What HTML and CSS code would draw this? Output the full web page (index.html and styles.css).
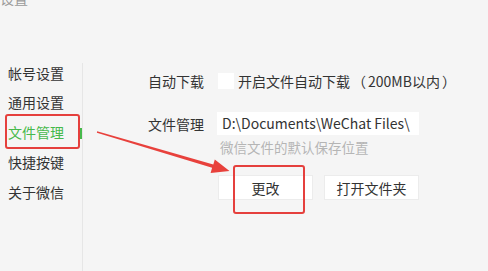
FILE: index.html
```html
<!DOCTYPE html>
<html lang="zh">
<head>
<meta charset="utf-8">
<link rel="stylesheet" href="styles.css">
</head>
<body>
<div class="page">
  <div class="title">设置</div>
  <div class="main">
    <ul class="nav">
      <li>帐号设置</li>
      <li>通用设置</li>
      <li class="active">文件管理</li>
      <li>快捷按键</li>
      <li>关于微信</li>
    </ul>
    <div class="content">
      <div class="row row-auto">
        <span class="label">自动下载</span>
        <span class="check"></span>
        <span class="check-text">开启文件自动下载<span class="paren">（</span>200MB以内<span class="paren">）</span></span>
      </div>
      <div class="row row-path">
        <span class="label">文件管理</span>
        <span class="path">D:\Documents\WeChat Files\</span>
      </div>
      <div class="hint">微信文件的默认保存位置</div>
      <div class="buttons">
        <button class="btn">更改</button>
        <button class="btn">打开文件夹</button>
      </div>
    </div>
  </div>
  <div class="mark mark-nav"></div>
  <div class="mark mark-btn"></div>
  <svg class="arrow" width="488" height="271" viewBox="0 0 488 271">
    <polygon fill="#e8413c" points="96.9,132.7 212.1,167.8 210.6,173 229.5,171 214.8,159.4 213.3,164.6 97.1,131.3"/>
  </svg>
</div>
</body>
</html>
```
FILE: styles.css
```css
* { box-sizing: border-box; }
html, body { margin: 0; padding: 0; }
body {
  background: #f5f5f5;
  font-family: "Noto Sans CJK SC", "Noto Sans", sans-serif;
  color: #333;
  font-size: 14px;
}
.page {
  position: relative;
  width: 488px;
  height: 271px;
  overflow: hidden;
}
.title {
  color: #9a9a9a;
  font-size: 14px;
  line-height: 20px;
  margin-top: -12px;
  height: 20px;
}
.main {
  display: flex;
  margin-top: 55px;
  height: 208px;
}
.nav {
  list-style: none;
  margin: 0;
  padding: 0;
  width: 83px;
  border-right: 1px solid #e6e6e6;
}
.nav li {
  height: 29.75px;
  line-height: 29.75px;
  padding-left: 8px;
  color: #333;
  position: relative;
}
.nav li:first-child { margin-top: -4.5px; }
.nav li.active { color: #46b94b; }
.nav li.active::after {
  content: "";
  position: absolute;
  right: 0;
  top: 10px;
  width: 2px;
  height: 11px;
  background: #46b94b;
}
.content {
  padding-left: 65px;
  flex: 1;
}
.row {
  display: flex;
  align-items: center;
}
.label {
  width: 70px;
  flex: none;
}
.row-auto {
  height: 24px;
  margin-top: 6px;
}
.check {
  width: 16px;
  height: 16px;
  background: #fff;
  margin-right: 4px;
  flex: none;
}
.check-text { white-space: nowrap; }
.paren { padding: 0 2px; }
.row-path {
  margin-top: 19px;
  height: 23px;
}
.path {
  background: #fff;
  height: 23px;
  line-height: 23px;
  width: 202px;
  margin-left: -1px;
  padding-left: 5px;
  white-space: nowrap;
  overflow: hidden;
}
.hint {
  margin-top: 3px;
  padding-left: 72px;
  color: #b5b5b5;
  font-size: 13.5px;
  line-height: 18px;
}
.buttons {
  display: flex;
  gap: 11px;
  margin-top: 19px;
  padding-left: 70px;
}
.btn {
  width: 95px;
  height: 25px;
  background: #fff;
  border: 1px solid #ececec;
  font-family: inherit;
  font-size: 14px;
  color: #333;
  padding: 0;
}
.mark {
  position: absolute;
  border: 2px solid #e5403d;
  border-radius: 3px;
}
.mark-nav { left: 5px; top: 114px; width: 75px; height: 35px; }
.mark-btn { left: 233px; top: 165px; width: 72px; height: 49px; }
.arrow {
  position: absolute;
  left: 0;
  top: 0;
}
```
